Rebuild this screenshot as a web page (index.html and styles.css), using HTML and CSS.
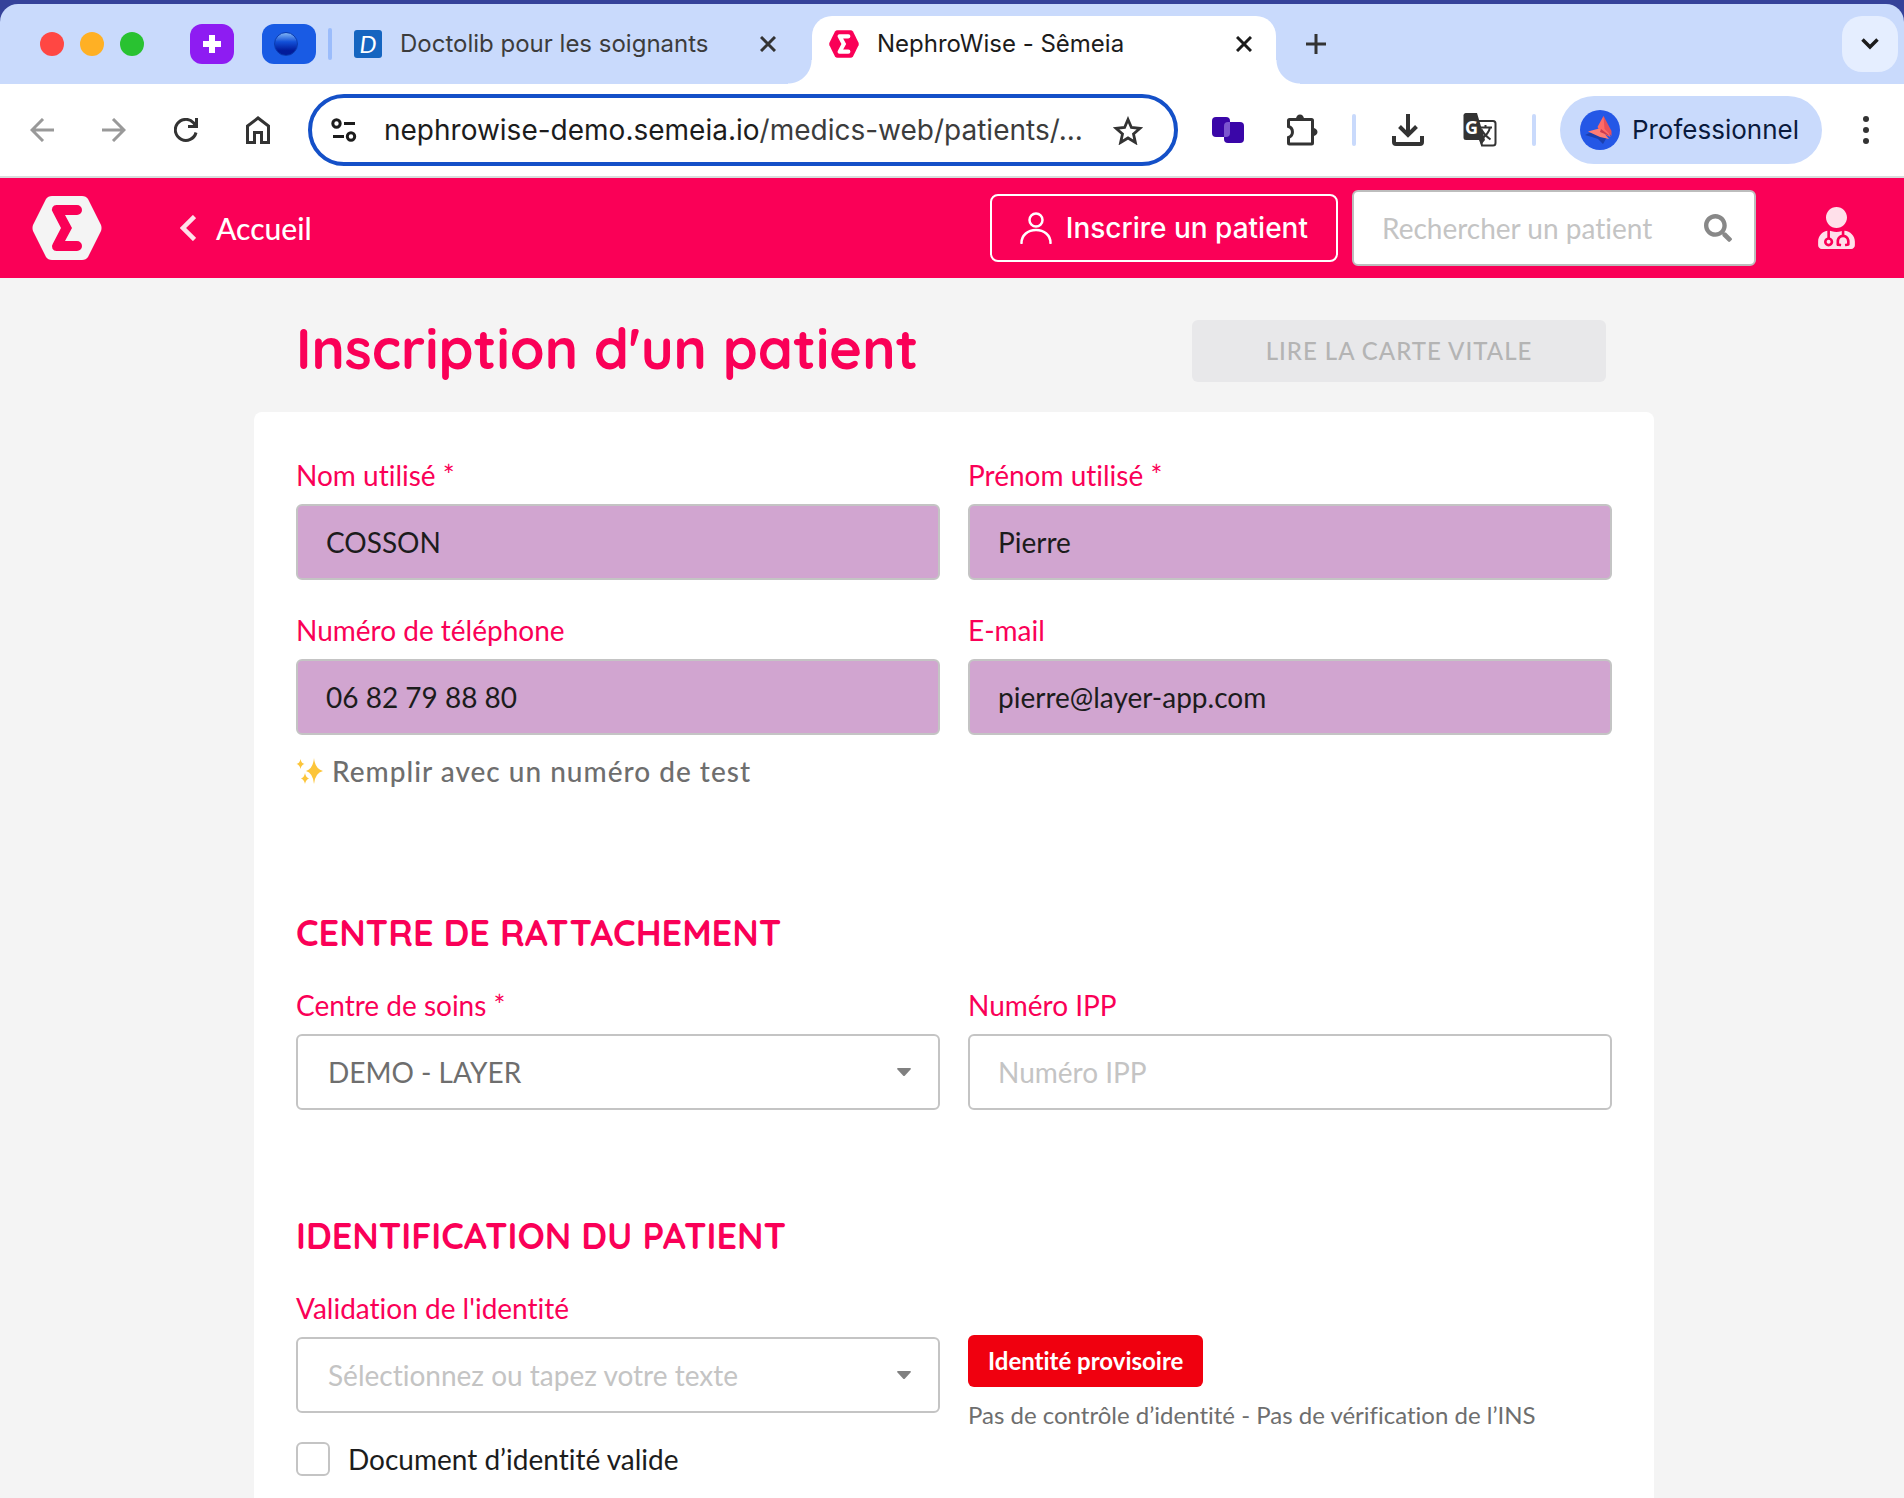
FILE: index.html
```
<!DOCTYPE html>
<html lang="fr">
<head>
<meta charset="UTF-8">
<meta name="viewport" content="width=device-width, initial-scale=1.0">
<title>NephroWise - Sêmeia</title>
<link rel="stylesheet" href="styles.css">
</head>
<body>
<div class="browser">
    <div class="tabstrip">
        <div class="lights">
            <span class="light red"></span>
            <span class="light yellow"></span>
            <span class="light green"></span>
        </div>
        <button class="pinned purple" aria-label="Onglet épinglé">
            <svg width="18" height="18" viewBox="0 0 18 18"><path d="M6 0h6v6h6v6h-6v6H6v-6H0V6h6z" fill="#fff"/></svg>
        </button>
        <button class="pinned blue" aria-label="Groupe d'onglets"><span class="ball"></span></button>
        <span class="separator dark"></span>
        <div class="tab">
            <span class="doctolib">D</span>
            <span class="tab-title">Doctolib pour les soignants</span>
            <button class="icon-btn" aria-label="Fermer l'onglet">
                <svg width="16" height="16" viewBox="0 0 16 16" fill="none" stroke="#333" stroke-width="3"><path d="M1 1l14 14M15 1L1 15"/></svg>
            </button>
        </div>
        <div class="tab active">
            <svg width="30" height="28" viewBox="0 0 70 64">
                <path d="M20 0H50Q54 0 56 3L69 29Q70 32 69 35L56 61Q54 64 50 64H20Q16 64 14 61L1 35Q0 32 1 29L14 3Q16 0 20 0Z" fill="#fa0057"/>
                <path d="M24.5 9H45a5 5 0 0 1 0 10H33L40 32L33 45H45a5 5 0 0 1 0 10H24.500a4.500 4.500 0 0 1-3.800-7L29 32 20.700 16a4.500 4.500 0 0 1 3.800-7z" fill="#fff"/>
            </svg>
            <span class="tab-title">NephroWise - Sêmeia</span>
            <button class="icon-btn" aria-label="Fermer l'onglet">
                <svg width="16" height="16" viewBox="0 0 16 16" fill="none" stroke="#1c1c1c" stroke-width="3"><path d="M1 1l14 14M15 1L1 15"/></svg>
            </button>
        </div>
        <button class="icon-btn new-tab" aria-label="Nouvel onglet">
            <svg width="20" height="20" viewBox="0 0 20 20" fill="none" stroke="#333" stroke-width="3"><path d="M10 0v20M0 10h20"/></svg>
        </button>
        <button class="tab-search" aria-label="Rechercher un onglet">
            <svg width="18" height="12" viewBox="0 0 18 12" fill="none" stroke="#1c1c1c" stroke-width="3.500"><path d="M1.500 1.500L9 9l7.500-7.500"/></svg>
        </button>
    </div>

    <div class="toolbar">
        <div class="nav">
            <button class="icon-btn" aria-label="Retour">
                <svg width="24" height="24" viewBox="0 0 24 24" fill="none" stroke="#999" stroke-width="3"><path d="M24 12H2.500M13 1L2 12l11 11"/></svg>
            </button>
            <button class="icon-btn" aria-label="Avancer">
                <svg width="24" height="24" viewBox="0 0 24 24" fill="none" stroke="#999" stroke-width="3"><path d="M0 12h21.500M11 1l11 11-11 11"/></svg>
            </button>
            <button class="icon-btn" aria-label="Actualiser">
                <svg width="24" height="24" viewBox="0 0 24 24" fill="none" stroke="#333" stroke-width="3"><path d="M22 14.500A10.500 10.500 0 1 1 19.500 4.700L22 8.500M22.500 0v8.500H14"/></svg>
            </button>
            <button class="icon-btn" aria-label="Accueil du navigateur">
                <svg width="24" height="28" viewBox="0 0 24 28" fill="none" stroke="#333" stroke-width="3"><path d="M1.500 26.500V10L12 2l10.500 8v16.500H15.500V16.500h-7v10z"/></svg>
            </button>
        </div>
        <div class="omnibox">
            <svg width="26" height="24" viewBox="0 0 26 24" fill="none" stroke="#1c1c1c" stroke-width="3"><circle cx="5.500" cy="5.500" r="3.700"/><path d="M13 5.500h11M2 18.500h11"/><circle cx="20" cy="18.500" r="3.700"/></svg>
            <div class="url">nephrowise-demo.semeia.io<span>/medics-web/patients/...</span></div>
            <button class="icon-btn" aria-label="Ajouter aux favoris">
                <svg width="30" height="29" viewBox="0 0 30 29" fill="none" stroke="#333" stroke-width="2.800"><path d="M15 3.500l3.400 8 8.600.8-6.500 5.700 1.900 8.500L15 22l-7.400 4.500L9.500 18 3 12.300l8.600-.8z"/></svg>
            </button>
        </div>
        <button class="icon-btn ext" aria-label="Layer">
            <svg width="32" height="26" viewBox="0 0 32 26"><rect width="18" height="20" rx="4" fill="#3a06a8"/><rect x="12" y="5" width="20" height="21" rx="4" fill="#3a06a8"/><path d="M12 9a4 4 0 0 1 4-4h2v11a4 4 0 0 1-4 4h-2z" fill="#7b55cf"/></svg>
        </button>
        <button class="icon-btn puzzle" aria-label="Extensions">
            <svg width="32" height="32" viewBox="0 0 32 32"><path d="M3.500 5.500h22a1 1 0 0 1 1 1v22.500a1 1 0 0 1-1 1h-22a1 1 0 0 1-1-1v-5.500a5.800 5.800 0 0 0 0-11v-6a1 1 0 0 1 1-1z" fill="none" stroke="#333" stroke-width="3"/><path d="M10 5a4 4.500 0 0 1 8 0zM27 14a4.500 4 0 0 1 0 8z" fill="#333"/></svg>
        </button>
        <span class="separator"></span>
        <button class="icon-btn download" aria-label="Téléchargements">
            <svg width="32" height="32" viewBox="0 0 32 32" fill="none" stroke="#333" stroke-width="4"><path d="M16 0v21M7.500 12.500L16 21l8.500-8.500M2 22v6a2 2 0 0 0 2 2h24a2 2 0 0 0 2-2v-6"/></svg>
        </button>
        <button class="icon-btn translate" aria-label="Traduire">
            <svg width="34" height="34" viewBox="0 0 34 34">
                <path d="M14 8h16a2.500 2.500 0 0 1 2.500 2.500V30a2.500 2.500 0 0 1-2.500 2.500H19z" fill="#fff" stroke="#333" stroke-width="2"/>
                <path d="M3 0h11l8 27-4 5-2-5H3a2.500 2.500 0 0 1-2.500-2.500V3A2.500 2.500 0 0 1 3 0z" fill="#333"/>
                <text x="2" y="21" class="g-letter">G</text>
                <path d="M16 14.500h13M22.500 12v2.500M27 14.500c-1 5-4 8-8 11M18.500 16.500c2 4.500 5 7 9 10" fill="none" stroke="#333" stroke-width="2"/>
            </svg>
        </button>
        <span class="separator second"></span>
        <button class="profile">
            <svg width="40" height="40" viewBox="0 0 40 40">
                <circle cx="20" cy="20" r="20" fill="#2457e6"/>
                <path d="M5 25l13-6 9 8-4 7-5-5-6-2z" fill="#1b3fae"/>
                <path d="M23.500 6l-6 11 3 5 10 5z" fill="#ff6b66"/>
                <path d="M23.500 6l8 15v5l-7-7z" fill="#e8505a"/>
                <path d="M8 21.500l11-3 5 4.500 5 6-9-2z" fill="#ff7d74"/>
                <path d="M20 22l10 4-9-7z" fill="#c93c4f"/>
            </svg>
            Professionnel
        </button>
        <button class="icon-btn menu" aria-label="Menu">
            <svg width="6" height="28" viewBox="0 0 6 28" fill="#333"><circle cx="3" cy="3" r="3"/><circle cx="3" cy="14" r="3"/><circle cx="3" cy="25" r="3"/></svg>
        </button>
    </div>
</div>

<header class="header">
    <a href="#" class="logo" aria-label="Sêmeia">
        <svg width="70" height="64" viewBox="0 0 70 64">
            <path d="M20 0H50Q54 0 56 3L69 29Q70 32 69 35L56 61Q54 64 50 64H20Q16 64 14 61L1 35Q0 32 1 29L14 3Q16 0 20 0Z" fill="#f4f4f4"/>
            <path d="M24.500 9H45a5 5 0 0 1 0 10H33L40 32L33 45H45a5 5 0 0 1 0 10H24.500a4.500 4.500 0 0 1-3.800-7L29 32 20.700 16a4.500 4.500 0 0 1 3.800-7z" fill="#fa0057"/>
        </svg>
    </a>
    <a href="#" class="back">
        <svg width="16" height="26" viewBox="0 0 16 26" fill="none" stroke="#ffe0ea" stroke-width="4.500"><path d="M14.500 1.500L3 13l11.500 11.500"/></svg>
        Accueil
    </a>
    <button class="enroll">
        <svg width="32" height="32" viewBox="0 0 32 32" fill="none" stroke="#fff" stroke-width="2.500" stroke-linecap="round"><circle cx="16" cy="8" r="6.500"/><path d="M1.500 31c0-8 6.500-13 14.500-13s14.500 5 14.500 13"/></svg>
        Inscrire un patient
    </button>
    <div class="search">
        <input type="text" placeholder="Rechercher un patient" aria-label="Rechercher un patient">
        <svg width="28" height="28" viewBox="0 0 512 512" fill="#888"><path d="M505 442.700L405.300 343c-4.500-4.500-10.600-7-17-7H372c27.600-35.300 44-79.700 44-128C416 93.100 322.900 0 208 0S0 93.100 0 208s93.100 208 208 208c48.300 0 92.700-16.400 128-44v16.300c0 6.400 2.500 12.500 7 17l99.700 99.700c9.400 9.400 24.600 9.400 33.900 0l28.300-28.300c9.400-9.400 9.400-24.600.1-34zM208 336c-70.700 0-128-57.200-128-128 0-70.700 57.200-128 128-128 70.700 0 128 57.200 128 128 0 70.700-57.200 128-128 128z"/></svg>
    </div>
    <button class="icon-btn" aria-label="Mon compte">
        <svg width="37" height="42" viewBox="0 0 448 512" fill="#ffe0ea"><path d="M224 256c70.700 0 128-57.300 128-128S294.700 0 224 0 96 57.300 96 128s57.300 128 128 128zM104 424c0 13.300 10.700 24 24 24s24-10.700 24-24-10.700-24-24-24-24 10.700-24 24zm216-135.400v49c36.500 7.400 64 39.800 64 78.400v41.700c0 7.600-5.400 14.200-12.900 15.700l-32.200 6.400c-4.300.9-8.500-1.900-9.400-6.300l-3.100-15.700c-.9-4.300 1.900-8.600 6.300-9.400l19.300-3.900V416c0-62.800-96-65.100-96 1.900v26.700l19.300 3.900c4.300.9 7.100 5.100 6.300 9.400l-3.100 15.700c-.9 4.300-5.100 7.100-9.400 6.300l-31.200-4.200c-7.900-1.100-13.800-7.800-13.800-15.900V416c0-38.600 27.500-70.900 64-78.400v-45.200c-2.200.7-4.400 1.100-6.600 1.900-18 6.300-37.300 9.800-57.400 9.800s-39.400-3.500-57.400-9.800c-7.400-2.600-14.900-4.200-22.600-5.200v81.600c23.100 6.900 40 28.100 40 53.400 0 30.900-25.100 56-56 56s-56-25.100-56-56c0-25.300 16.900-46.500 40-53.400v-80.400C48.500 301 0 355.800 0 422.400v44.800C0 491.900 20.100 512 44.800 512h358.400c24.700 0 44.800-20.100 44.800-44.800v-44.800c0-72-56.800-130.300-128-133.800z"/></svg>
    </button>
</header>

<main>
    <div class="title-row">
        <h1>Inscription d'un patient</h1>
        <button class="vitale" disabled>LIRE LA CARTE VITALE</button>
    </div>

    <form class="card">
        <section class="grid">
            <div class="field">
                <label for="nom">Nom utilisé *</label>
                <input class="filled" type="text" id="nom" value="COSSON">
            </div>
            <div class="field">
                <label for="prenom">Prénom utilisé *</label>
                <input class="filled" type="text" id="prenom" value="Pierre">
            </div>
            <div class="field">
                <label for="tel">Numéro de téléphone</label>
                <input class="filled" type="tel" id="tel" value="06 82 79 88 80">
                <button type="button" class="fill-test">
                    <svg width="28" height="28" viewBox="0 0 28 28" fill="#fcc53a"><path d="M18 1q1 11 9 13-8 2-9 13-1-11-8-13 7-2 8-13zM4.500 2q.8 4.500 4 5-3.200.8-4 5-.8-4.200-4-5 3.200-.5 4-5zM9 16q.8 4.500 4 5.500-3.200 1-4 5.500-.8-4.500-4-5.500 3.200-1 4-5.500z"/></svg>
                    Remplir avec un numéro de test
                </button>
            </div>
            <div class="field">
                <label for="email">E-mail</label>
                <input class="filled" type="email" id="email" value="pierre@layer-app.com">
            </div>
        </section>

        <section class="grid">
            <h2>CENTRE DE RATTACHEMENT</h2>
            <div class="field">
                <label for="centre">Centre de soins *</label>
                <div class="select">
                    <select id="centre">
                        <option>DEMO - LAYER</option>
                    </select>
                    <svg width="14" height="8" viewBox="0 0 14 8"><path d="M1 0h12q1.500 0 .5 1.500L8 7.500q-1 1-2 0L.5 1.500Q-.5 0 1 0z" fill="#808080"/></svg>
                </div>
            </div>
            <div class="field">
                <label for="ipp">Numéro IPP</label>
                <input type="text" id="ipp" placeholder="Numéro IPP">
            </div>
        </section>

        <section class="grid">
            <h2>IDENTIFICATION DU PATIENT</h2>
            <div class="field">
                <label for="validation">Validation de l'identité</label>
                <div class="select">
                    <select id="validation" class="empty">
                        <option>Sélectionnez ou tapez votre texte</option>
                    </select>
                    <svg width="14" height="8" viewBox="0 0 14 8"><path d="M1 0h12q1.500 0 .5 1.500L8 7.500q-1 1-2 0L.5 1.500Q-.5 0 1 0z" fill="#808080"/></svg>
                </div>
                <div class="check">
                    <input type="checkbox" id="document">
                    <label for="document">Document d’identité valide</label>
                </div>
            </div>
            <div class="status">
                <span class="badge">Identité provisoire</span>
                <p>Pas de contrôle d’identité - Pas de vérification de l’INS</p>
            </div>
        </section>
    </form>
</main>
</body>
</html>
```

FILE: styles.css
```
* {
  box-sizing: border-box;
}

body {
  margin: 0;
  min-height: 100vh;
  display: flex;
  flex-direction: column;
  background-color: #f4f4f4;
  font-family: Lato, sans-serif;
  font-size: 28px;
  line-height: 34px;
  font-variant-ligatures: none;
  color: #1c1c1c;
}

button, input, select {
  font: inherit;
  color: inherit;
}

button {
  padding: 0;
  border: none;
  background: none;
  cursor: pointer;
}

svg {
  display: block;
  flex-shrink: 0;
}

/* fenetre du navigateur */
.browser {
  padding-top: 4px;
  background-color: #35429a;
  font-family: Inter, sans-serif;
}

.tabstrip {
  display: flex;
  align-items: center;
  height: 80px;
  padding: 0 6px 0 40px;
  background-color: #c9dafc;
  border-radius: 18px 18px 0 0;
}

.lights {
  display: flex;
  gap: 16px;
  margin-right: 46px;
}

.light {
  width: 24px;
  height: 24px;
  border-radius: 50%;
}

.red { background-color: #ff4743; }
.yellow { background-color: #ffb024; }
.green { background-color: #29c231; }

.pinned {
  display: flex;
  align-items: center;
  justify-content: center;
  width: 44px;
  height: 40px;
  border-radius: 12px;
}

.purple {
  background-color: #8e1cf2;
}

.blue {
  width: 54px;
  margin-left: 28px;
  padding-right: 6px;
  background-color: #195be4;
}

.ball {
  width: 24px;
  height: 24px;
  border-radius: 50%;
  background: linear-gradient(#7fb4f5, #1250d8 40%, #021b9a 80%);
  border: 1px solid #0a3bb0;
}

.separator {
  width: 4px;
  height: 32px;
  border-radius: 2px;
  background-color: #c9dafc;
}

.separator.dark {
  margin: 0 22px 0 12px;
  background-color: #9bbcfb;
}

.tab {
  display: flex;
  align-items: center;
  flex: 0 1 458px;
  padding-right: 36px;
  font-size: 24px;
  color: #3c3c3c;
}

.doctolib {
  width: 28px;
  height: 28px;
  border-radius: 3px;
  background-color: #1565c0;
  color: #fff;
  font-family: Lato, sans-serif;
  font-style: italic;
  line-height: 28px;
  text-align: center;
}

.tab-title {
  flex: 1;
  margin-left: 18px;
  white-space: nowrap;
}

.tab.active {
  position: relative;
  flex-basis: 464px;
  align-self: flex-end;
  height: 68px;
  padding: 0 24px 12px 17px;
  background-color: #fff;
  border-radius: 20px 20px 0 0;
  color: #1c1c1c;
}

/* coins inverses sous l'onglet actif */
.tab.active::before,
.tab.active::after {
  content: "";
  position: absolute;
  bottom: 0;
  width: 24px;
  height: 24px;
}

.tab.active::before {
  right: 100%;
  background: radial-gradient(circle at 0 0, transparent 23px, #fff 24px);
}

.tab.active::after {
  left: 100%;
  background: radial-gradient(circle at 100% 0, transparent 23px, #fff 24px);
}

.new-tab {
  margin-left: 30px;
}

.tab-search {
  display: flex;
  align-items: center;
  justify-content: center;
  width: 56px;
  height: 56px;
  margin-left: auto;
  border-radius: 20px;
  background-color: #e5eeff;
}

.toolbar {
  display: flex;
  align-items: center;
  height: 94px;
  padding: 0 35px 0 30px;
  background-color: #fff;
  border-bottom: 2px solid #d8dcdc;
}

.nav {
  display: flex;
  align-items: center;
  gap: 48px;
  margin-right: 38px;
}

.omnibox {
  display: flex;
  align-items: center;
  flex: 1;
  min-width: 0;
  height: 72px;
  padding: 0 31px 0 19px;
  border: 4px solid #1450c8;
  border-radius: 36px;
}

.url {
  flex: 1;
  margin-left: 27px;
  overflow: hidden;
  white-space: nowrap;
}

.url span {
  color: #3c3c3c;
}

.ext { margin-left: 34px; }
.puzzle { margin: 0 34px 0 42px; }
.download { margin: 0 39px 0 36px; }

.second {
  margin: 0 24px 0 35px;
}

.g-letter {
  font: bold 18px "Open Sans", sans-serif;
  fill: #fff;
}

.profile {
  display: flex;
  align-items: center;
  gap: 12px;
  height: 68px;
  padding: 0 23px 0 20px;
  border-radius: 34px;
  background-color: #c9dafc;
  color: #0a1a3d;
  font-size: 26px;
}

.menu {
  margin-left: 41px;
}

/* barre NephroWise */
.header {
  display: flex;
  align-items: center;
  height: 100px;
  padding: 0 49px 0 32px;
  background-color: #fa0057;
  color: #fff;
}

.back {
  display: flex;
  align-items: center;
  gap: 20px;
  margin: 0 auto 0 78px;
  color: #fff;
  font-size: 30px;
  font-weight: 500;
  text-decoration: none;
}

.enroll {
  display: flex;
  align-items: center;
  gap: 14px;
  height: 68px;
  margin-right: 14px;
  padding: 0 28px;
  border: 2px solid #fff;
  border-radius: 8px;
  font-family: Inter, sans-serif;
  font-weight: 500;
}

.search {
  display: flex;
  align-items: center;
  width: 404px;
  height: 76px;
  margin-right: 62px;
  padding: 0 22px 0 28px;
  border: 2px solid #bdbdbd;
  border-radius: 6px;
  background-color: #fff;
}

.search input {
  flex: 1;
  min-width: 0;
  padding: 0;
  border: none;
  outline: none;
  color: #1c1c1c;
}

::placeholder {
  color: #c4c4c4;
  opacity: 1;
}

/* formulaire */
main {
  flex: 1;
  display: flex;
  flex-direction: column;
  padding: 0 250px 0 254px;
}

.title-row {
  display: flex;
  align-items: flex-start;
  justify-content: space-between;
  padding: 42px 48px 30px 42px;
}

h1, h2 {
  margin: 0;
  font-family: Quicksand, Lato, sans-serif;
  font-weight: bold;
  color: #fa0057;
}

h1 {
  font-size: 56px;
  line-height: 56px;
}

h2 {
  grid-column: 1 / -1;
  font-size: 36px;
  line-height: 44px;
}

.vitale {
  width: 414px;
  height: 62px;
  border-radius: 6px;
  background-color: #e8e8ea;
  color: #b4b4b4;
  font-size: 24px;
  font-weight: 500;
  letter-spacing: 1px;
}

.card {
  flex: 1;
  padding: 46px 42px 20px;
  border-radius: 8px 8px 0 0;
  background-color: #fff;
}

.grid {
  display: grid;
  grid-template-columns: 1fr 1fr;
  gap: 33px 28px;
}

.grid + .grid {
  margin-top: 104px;
}

.field > label {
  display: block;
  margin-bottom: 12px;
  color: #fa0057;
}

.field > input,
select {
  display: block;
  width: 100%;
  height: 76px;
  padding: 0 28px;
  border: 2px solid #c4c4c4;
  border-radius: 6px;
  background-color: #fff;
}

.field > .filled {
  background-color: #d1a5d0;
}

.fill-test {
  display: flex;
  align-items: center;
  gap: 8px;
  padding: 19px 0;
  color: #6e6e6e;
  font-weight: 500;
  letter-spacing: 1px;
}

.select {
  display: grid;
  align-items: center;
}

.select > * {
  grid-area: 1 / 1;
}

.select svg {
  justify-self: end;
  margin-right: 29px;
  pointer-events: none;
}

select {
  appearance: none;
  padding: 0 30px;
  color: #6e6e6e;
}

select.empty {
  color: #c4c4c4;
}

.check {
  display: flex;
  align-items: center;
  gap: 18px;
  margin-top: 29px;
}

.check input {
  appearance: none;
  width: 34px;
  height: 34px;
  margin: 0;
  border: 2px solid #c4c4c4;
  border-radius: 6px;
  background-color: #fff;
}

.status {
  padding-top: 44px;
  font-size: 24px;
}

.badge {
  display: inline-block;
  padding: 9px 20px;
  border-radius: 6px;
  background-color: #f0000f;
  color: #fff;
  font-weight: bold;
}

.status p {
  margin: 11px 0 0;
  color: #6e6e6e;
}
```
